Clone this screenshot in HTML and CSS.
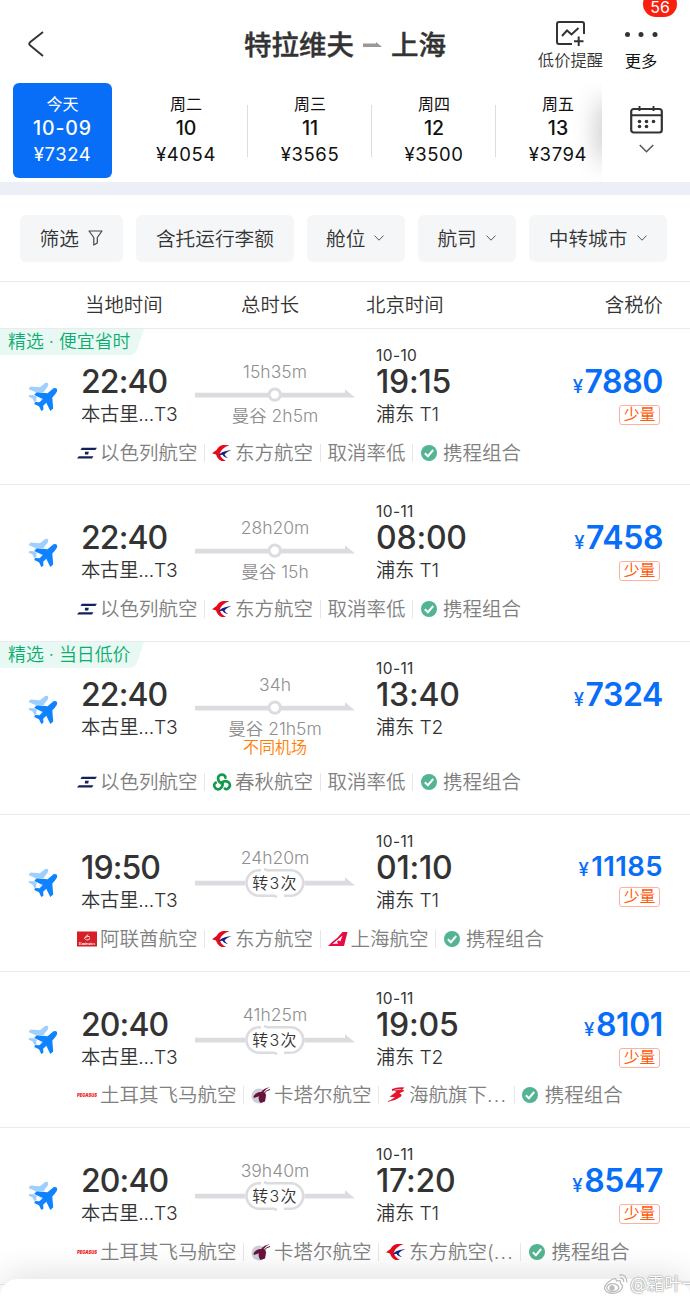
FILE: index.html
```html
<!DOCTYPE html>
<html lang="zh-CN">
<head>
  <meta charset="UTF-8">
  <meta name="viewport" content="width=device-width, initial-scale=1.0">
  <title>特拉维夫 - 上海</title>
  <link rel="stylesheet" href="styles.css">
</head>
<body>
  <!-- shared icons -->
  <svg class="sprite" width="0" height="0">
    <symbol id="chevron" viewBox="0 0 10 6">
      <path d="M.5 .6L5 5.2L9.500 .6" fill="none" stroke="#555" stroke-width="1"/>
    </symbol>
    <symbol id="planes" viewBox="0 0 30 30">
      <path transform="translate(-4.800 -4.300) scale(.86)" fill="#9dcfff" d="M25.500 6.300Q29.500 5 29.200 8.500Q29 10.500 24.300 15.500L25.200 26.500L22.300 29L18.300 20.800L15.200 23.700L15.400 27.800L13.300 29L11 24.200L6.200 22L7.300 20L11.500 20.300L14.800 17L6.200 13L8.600 10.300L19.500 11.200Z"/>
      <path fill="#0f83ff" stroke="#fff" stroke-width="1.200" paint-order="stroke" stroke-linejoin="round" d="M25.500 6.300Q29.500 5 29.200 8.500Q29 10.500 24.300 15.500L25.200 26.500L22.300 29L18.300 20.800L15.200 23.700L15.400 27.800L13.300 29L11 24.200L6.200 22L7.300 20L11.500 20.300L14.800 17L6.200 13L8.600 10.300L19.500 11.200Z"/>
    </symbol>
    <symbol id="route-one" viewBox="0 0 160 30">
      <path d="M0 12.800H150V9.200L160 17.400H0Z" fill="#dcdce0"/>
      <circle cx="79.800" cy="14.600" r="5.700" fill="#fff" stroke="#dcdce0" stroke-width="3"/>
    </symbol>
    <symbol id="route-many" viewBox="0 0 160 30">
      <path d="M0 12.800H150V9.200L160 17.400H0Z" fill="#dcdce0"/>
      <rect x="50" y="1" width="59.500" height="28" rx="14" fill="#fff"/>
      <path d="M66 2.200H64.300A12.800 12.800 0 0 0 64.300 27.800H79L82 29M69 1L72 2.200H95.400A12.800 12.800 0 0 1 95.400 27.800H89" fill="none" stroke="#dcdce0" stroke-width="2.600"/>
    </symbol>
    <symbol id="check" viewBox="0 0 16 16">
      <circle cx="8" cy="8" r="8" fill="#52b491"/>
      <path d="M3.800 8.200L6.900 11.200L12.200 5" fill="none" stroke="#fff" stroke-width="2"/>
    </symbol>
    <symbol id="elal" viewBox="0 0 20 18">
      <path d="M4.800 3.800H20L18.300 5.900H3.500ZM1.800 12.300H16.500L15 14.400H0Z" fill="#12215a"/>
      <path d="M8 7.800H11.800L11.200 10.400H7.800Z" fill="#12215a"/>
    </symbol>
    <symbol id="eastern" viewBox="0 0 20 18">
      <path d="M17.500 1H11Q7 1.300 4.500 6L0 9.200L4 10.600Q5.500 15.500 9.500 17H14Q8.500 14 7.700 9.700Q9 4.500 17.500 1Z" fill="#e60b1b"/>
      <path d="M19.500 6.300Q12.500 6.300 7.700 10L7 12Q9.500 10.500 10.800 10.900Q11.500 12.900 16 14Q13 12.200 12.600 10.300Q15 7.500 19.500 6.300Z" fill="#16207d"/>
    </symbol>
    <symbol id="spring" viewBox="0 0 20 18">
      <g fill="none" stroke="#15994a" stroke-width="2.700" stroke-linecap="round">
        <path id="curl" d="M10.500 10.500C5 9.500 4.500 1.700 9.800 1.600C12 1.600 13.600 2.900 13.400 4.700"/>
        <use href="#curl" transform="rotate(120 10 10)"/>
        <use href="#curl" transform="rotate(240 10 10)"/>
      </g>
    </symbol>
    <symbol id="emirates" viewBox="0 0 20 18">
      <rect width="20" height="15" y="1.500" fill="#d71f28"/>
      <path d="M9 9.800Q6.500 8.500 8.600 6.700L11.300 4.500M8.500 7.500Q11 5.500 13 7M9.500 10Q14 9.500 12 8" fill="none" stroke="#fff" stroke-width=".9"/>
      <text x="10" y="15.300" text-anchor="middle" textLength="16" lengthAdjust="spacingAndGlyphs" font-family="Liberation Serif, serif" font-weight="bold" font-size="5" fill="#fff">Emirates</text>
    </symbol>
    <symbol id="shanghai" viewBox="0 0 20 18">
      <path d="M14.500 2H19.500L16 16H0L3.500 12.500Q9 9 14.500 2Z" fill="#e50b42"/>
      <path d="M4.500 14L14.500 5.500L12.300 11.500Q10.500 9.800 9.500 11Q8.500 12.500 10.500 13.500Z" fill="#fff"/>
    </symbol>
    <symbol id="pegasus" viewBox="0 0 20 18">
      <text x="10" y="11" text-anchor="middle" textLength="20" lengthAdjust="spacingAndGlyphs" font-family="Inter, sans-serif" font-weight="900" font-style="italic" font-size="5" fill="#ed1c24">PEGASUS</text>
    </symbol>
    <symbol id="qatar" viewBox="0 0 20 18">
      <circle cx="8" cy="10" r="7.500" fill="#cbd0d8"/>
      <path d="M19 1Q12 2.700 10.200 6Q5.500 5.500 2.500 10.300L2.800 12L8 10.200Q6.700 13.500 9.500 17L14 15.500L15 9Q14.200 6.500 12.500 6Q14.500 3 19 1Z" fill="#6b123c"/>
      <path d="M19 3.500Q14.500 4.500 13.500 7" fill="none" stroke="#6b123c"/>
    </symbol>
    <symbol id="hainan" viewBox="0 0 20 18">
      <path d="M6 3Q11 .8 18.500 1.500L16 4Q19 4 18 5.300Q14 6.500 13.500 7.500Q16.500 8 15 10.500Q10 14.500 0 16Q6 13.500 9 11.200L3.500 10.800L10 6Q9 3.800 6 5Z" fill="#e5162b"/>
      <path d="M9 4Q12 3.300 15 3.500" fill="none" stroke="#fff" stroke-width=".6"/>
    </symbol>
  </svg>

  <div class="page">
    <header class="top-bar">
      <svg class="back" width="16" height="26" viewBox="0 0 16 26"><path d="M15 1L2 11.300Q.5 12.800 2 14.300L15 25" fill="none" stroke="#333" stroke-width="1.900"/></svg>
      <h1 class="title">
        <span>特拉维夫</span>
        <svg width="19" height="6" viewBox="0 0 19 6"><path d="M0 1.500H13V0L19 5H0Z" fill="#999"/></svg>
        <span>上海</span>
      </h1>
      <div class="tools">
        <div class="tool alert">
          <svg width="29" height="26" viewBox="0 0 29 26" fill="none" stroke="#333" stroke-width="2">
            <path d="M28 13V3Q28 1 26 1H3Q1 1 1 3V21Q1 23 3 23H16"/>
            <path d="M6 15L11 9.500L15.500 13.500L22.500 7M22.700 15.500V25M18 20.200H27.500"/>
          </svg>
          <span>低价提醒</span>
        </div>
        <div class="tool more">
          <span class="badge">56</span>
          <svg width="34" height="26" viewBox="0 0 34 26" fill="#333"><circle cx="3.500" cy="13.500" r="2.500"/><circle cx="17" cy="13.500" r="2.500"/><circle cx="31" cy="13.500" r="2.500"/></svg>
          <span>更多</span>
        </div>
      </div>
    </header>

    <div class="date-bar">
      <div class="dates">
        <div class="date active"><span>今天</span><b>10-09</b><em>¥7324</em></div>
        <div class="date"><span>周二</span><b>10</b><em>¥4054</em></div>
        <div class="date line"><span>周三</span><b>11</b><em>¥3565</em></div>
        <div class="date line"><span>周四</span><b>12</b><em>¥3500</em></div>
        <div class="date line"><span>周五</span><b>13</b><em>¥3794</em></div>
      </div>
      <div class="calendar">
        <svg width="33" height="28" viewBox="0 0 33 28">
          <rect x="1.200" y="3" width="30.600" height="23.500" rx="2.500" fill="none" stroke="#333" stroke-width="2.200"/>
          <path d="M1 9.200H32M9.500 0V5M23.500 0V5" stroke="#333" stroke-width="1.900"/>
          <g fill="#333"><circle cx="9.500" cy="15.500" r="1.800"/><circle cx="16.500" cy="15.500" r="1.800"/><circle cx="23.500" cy="15.500" r="1.800"/><circle cx="9.500" cy="20.500" r="1.800"/><circle cx="16.500" cy="20.500" r="1.800"/></g>
        </svg>
        <svg width="15" height="9"><use href="#chevron"/></svg>
      </div>
    </div>

    <div class="filters">
      <div class="chip">筛选 <svg width="15" height="16" viewBox="0 0 15 16"><path d="M1 1H14L9.300 7.500V13L5.800 15V7.500Z" fill="none" stroke="#444" stroke-width="1.200" stroke-linejoin="round"/></svg></div>
      <div class="chip">含托运行李额</div>
      <div class="chip">舱位 <svg width="10" height="6"><use href="#chevron"/></svg></div>
      <div class="chip">航司 <svg width="10" height="6"><use href="#chevron"/></svg></div>
      <div class="chip">中转城市 <svg width="10" height="6"><use href="#chevron"/></svg></div>
    </div>

    <div class="columns">
      <span>当地时间</span><span>总时长</span><span>北京时间</span><span>含税价</span>
    </div>

    <div class="list">
      <div class="card">
        <div class="ribbon">精选 · 便宜省时</div>
        <div class="flight">
          <svg class="planes"><use href="#planes"/></svg>
          <div class="stop"><strong>22:40</strong><span>本古里...T3</span></div>
          <div class="route"><span>15h35m</span><svg><use href="#route-one"/></svg><span>曼谷 2h5m</span></div>
          <div class="stop arrive"><small>10-10</small><strong>19:15</strong><span>浦东 T1</span></div>
          <div class="price"><p><i>¥</i>7880</p><span class="few">少量</span></div>
        </div>
        <div class="airlines">
          <span><svg><use href="#elal"/></svg>以色列航空</span><span><svg><use href="#eastern"/></svg>东方航空</span><span>取消率低</span><span class="combo"><svg><use href="#check"/></svg>携程组合</span>
        </div>
      </div>

      <div class="card">
        <div class="flight">
          <svg class="planes"><use href="#planes"/></svg>
          <div class="stop"><strong>22:40</strong><span>本古里...T3</span></div>
          <div class="route"><span>28h20m</span><svg><use href="#route-one"/></svg><span>曼谷 15h</span></div>
          <div class="stop arrive"><small>10-11</small><strong>08:00</strong><span>浦东 T1</span></div>
          <div class="price"><p><i>¥</i>7458</p><span class="few">少量</span></div>
        </div>
        <div class="airlines">
          <span><svg><use href="#elal"/></svg>以色列航空</span><span><svg><use href="#eastern"/></svg>东方航空</span><span>取消率低</span><span class="combo"><svg><use href="#check"/></svg>携程组合</span>
        </div>
      </div>

      <div class="card tall">
        <div class="ribbon">精选 · 当日低价</div>
        <div class="flight">
          <svg class="planes"><use href="#planes"/></svg>
          <div class="stop"><strong>22:40</strong><span>本古里...T3</span></div>
          <div class="route"><span>34h</span><svg><use href="#route-one"/></svg><span>曼谷 21h5m</span><span class="warn">不同机场</span></div>
          <div class="stop arrive"><small>10-11</small><strong>13:40</strong><span>浦东 T2</span></div>
          <div class="price"><p><i>¥</i>7324</p></div>
        </div>
        <div class="airlines">
          <span><svg><use href="#elal"/></svg>以色列航空</span><span><svg><use href="#spring"/></svg>春秋航空</span><span>取消率低</span><span class="combo"><svg><use href="#check"/></svg>携程组合</span>
        </div>
      </div>

      <div class="card">
        <div class="flight">
          <svg class="planes"><use href="#planes"/></svg>
          <div class="stop"><strong>19:50</strong><span>本古里...T3</span></div>
          <div class="route many"><span>24h20m</span><svg><use href="#route-many"/></svg><span class="times">转3次</span></div>
          <div class="stop arrive"><small>10-11</small><strong>01:10</strong><span>浦东 T1</span></div>
          <div class="price long"><p><i>¥</i>11185</p><span class="few">少量</span></div>
        </div>
        <div class="airlines">
          <span><svg><use href="#emirates"/></svg>阿联酋航空</span><span><svg><use href="#eastern"/></svg>东方航空</span><span><svg><use href="#shanghai"/></svg>上海航空</span><span class="combo"><svg><use href="#check"/></svg>携程组合</span>
        </div>
      </div>

      <div class="card">
        <div class="flight">
          <svg class="planes"><use href="#planes"/></svg>
          <div class="stop"><strong>20:40</strong><span>本古里...T3</span></div>
          <div class="route many"><span>41h25m</span><svg><use href="#route-many"/></svg><span class="times">转3次</span></div>
          <div class="stop arrive"><small>10-11</small><strong>19:05</strong><span>浦东 T2</span></div>
          <div class="price"><p><i>¥</i>8101</p><span class="few">少量</span></div>
        </div>
        <div class="airlines">
          <span><svg><use href="#pegasus"/></svg>土耳其飞马航空</span><span><svg><use href="#qatar"/></svg>卡塔尔航空</span><span><svg><use href="#hainan"/></svg>海航旗下<u>...</u></span><span class="combo"><svg><use href="#check"/></svg>携程组合</span>
        </div>
      </div>

      <div class="card">
        <div class="flight">
          <svg class="planes"><use href="#planes"/></svg>
          <div class="stop"><strong>20:40</strong><span>本古里...T3</span></div>
          <div class="route many"><span>39h40m</span><svg><use href="#route-many"/></svg><span class="times">转3次</span></div>
          <div class="stop arrive"><small>10-11</small><strong>17:20</strong><span>浦东 T1</span></div>
          <div class="price"><p><i>¥</i>8547</p><span class="few">少量</span></div>
        </div>
        <div class="airlines">
          <span><svg><use href="#pegasus"/></svg>土耳其飞马航空</span><span><svg><use href="#qatar"/></svg>卡塔尔航空</span><span><svg><use href="#eastern"/></svg>东方航空(<u>...</u></span><span class="combo"><svg><use href="#check"/></svg>携程组合</span>
        </div>
      </div>
    </div>

    <div class="sheet"></div>
    <div class="watermark">
      <svg width="25" height="22" viewBox="0 0 25 22" fill="none" stroke="#bbb" stroke-width="1.300">
        <path d="M9 6.500Q13 4 13.500 8Q18.500 6.500 17.500 10.500Q20.500 12 19 15.500Q16 20.500 9.500 20.300Q2 20 1.500 15Q2 10.500 9 6.500Z" fill="#fff"/>
        <ellipse cx="9.800" cy="14.700" rx="6" ry="4"/><circle cx="9" cy="15" r="2" fill="#bbb"/>
        <path d="M16.500 2Q23.500 .5 24 9.500M17 5.200Q20.500 4.500 20.800 9"/>
      </svg>
      <span>@霜叶一</span>
    </div>
  </div>
</body>
</html>
```
FILE: styles.css
```css
* {
  box-sizing: border-box;
}

body {
  margin: 0;
  background: #fff;
  color: #333;
  font-family: Inter, "Noto Sans CJK SC", sans-serif;
}

svg {
  display: block;
  flex: none;
}

.sprite {
  display: none;
}

.page {
  position: relative;
  width: 690px;
  height: 1300px;
  overflow: hidden;
}

/* header */
.top-bar {
  display: grid;
  grid-template-columns: 1fr auto 1fr;
  height: 83px;
  padding: 0 32px 0 28px;
}

.back {
  margin-top: 31px;
}

.title {
  display: flex;
  align-items: center;
  gap: 9px;
  height: 40px;
  margin: 25px 0 0 4px;
  font-size: 27.5px;
  font-weight: 500;
  line-height: 40px;
}

.title span {
  -webkit-text-stroke: 0.4px #333;
}

.tools {
  display: flex;
  justify-content: flex-end;
  gap: 21px;
}

.tool {
  position: relative;
  display: flex;
  flex-direction: column;
  align-items: center;
  padding-top: 21px;
  font-size: 16.3px;
  line-height: 24px;
  white-space: nowrap;
}

.tool svg {
  margin-bottom: 1px;
}

.alert {
  font-weight: 350;
}

.more {
  color: #111;
}

.more svg {
  margin-bottom: 2px;
}

.badge {
  position: absolute;
  top: -9px;
  left: 19px;
  width: 34px;
  height: 26px;
  border-radius: 13px;
  background: #f8200f;
  color: #fff;
  font-size: 16px;
  line-height: 33px;
  text-align: center;
}

/* date picker */
.date-bar {
  display: flex;
  height: 112px;
  border-bottom: 13px solid #eceff6;
}

.dates {
  position: relative;
  display: flex;
  width: 602px;
  overflow: hidden;
}

.dates::after {
  content: "";
  position: absolute;
  top: 22px;
  right: -14px;
  width: 14px;
  height: 52px;
  box-shadow: 0 0 26px 3px rgba(0, 0, 0, 0.25);
}

.date {
  position: relative;
  flex: none;
  display: flex;
  flex-direction: column;
  align-items: center;
  width: 124px;
  height: 95px;
  padding-top: 9px;
  color: #111;
}

.date.line::before {
  content: "";
  position: absolute;
  left: -1px;
  top: 22px;
  width: 1px;
  height: 52px;
  background: #ddd;
}

.date.active {
  width: 99px;
  margin: 0 12px 0 13px;
  border-radius: 6px;
  background: #086ef8;
  color: #fff;
}

.date span {
  font-size: 16px;
  line-height: 24px;
}

.date b {
  font-size: 19.5px;
  font-weight: 500;
  line-height: 25px;
}

.date.active b {
  letter-spacing: 0.9px;
}

.date em {
  font-size: 18.5px;
  font-style: normal;
  line-height: 27px;
  letter-spacing: 0.6px;
}

.calendar {
  display: flex;
  flex-direction: column;
  align-items: center;
  width: 88px;
  padding-top: 23px;
  gap: 10px;
}

/* filters */
.filters {
  display: flex;
  gap: 13px;
  height: 87px;
  padding: 20px 20px 0;
  border-bottom: 1px solid #e9ebf1;
}

.chip {
  display: flex;
  align-items: center;
  gap: 9px;
  height: 47px;
  padding: 0 19.5px 2px;
  border-radius: 6px;
  background: #f5f6f8;
  font-size: 19.7px;
  font-weight: 350;
  white-space: nowrap;
}

.chip svg {
  margin-right: 1px;
}

.columns {
  display: grid;
  grid-template-columns: 156px 125px 1fr auto;
  height: 47px;
  padding: 0 27px 0 85px;
  border-bottom: 1px solid #e9ebf1;
  font-size: 19.4px;
  font-weight: 350;
  line-height: 46px;
}

/* flights */
.card {
  position: relative;
  height: 156.4px;
  border-bottom: 1px solid #e9ebf1;
}

.card.tall {
  height: 173.6px;
}

.ribbon {
  position: absolute;
  top: 0;
  left: 0;
  width: 144px;
  height: 26px;
  padding-left: 8px;
  background: #e8f8f3;
  clip-path: path("M0 0H144L137 21Q135 26 130 26H0Z");
  color: #0aad6f;
  font-size: 17.9px;
  font-weight: 350;
  line-height: 25px;
  white-space: nowrap;
}

.flight {
  display: grid;
  grid-template-columns: 54px 113px 160px 1fr auto;
  height: 112.5px;
  padding: 0 27px 0 28px;
}

.tall .flight {
  height: 129px;
}

.planes {
  width: 30px;
  height: 30px;
  margin-top: 53px;
}

.stop {
  display: flex;
  flex-direction: column;
  padding-top: 35px;
}

.arrive {
  padding: 18px 0 0 21px;
}

.stop small {
  font-size: 15.5px;
  line-height: 17px;
  letter-spacing: 0.4px;
}

.stop strong {
  margin-left: -1px;
  font-size: 32px;
  font-weight: 500;
  line-height: 36px;
  letter-spacing: -0.9px;
}

.arrive strong {
  margin-left: 0;
  letter-spacing: -0.2px;
}

.stop span {
  padding-top: 1px;
  font-size: 19.3px;
  font-weight: 350;
  line-height: 27px;
  letter-spacing: -0.2px;
}

.stop:not(.arrive) span {
  margin-left: -1px;
}

.route {
  display: flex;
  flex-direction: column;
  align-items: center;
  padding-top: 31px;
  color: #8f8f8f;
  font-size: 17.5px;
  font-weight: 350;
  line-height: 23px;
}

.route svg {
  width: 160px;
  height: 30px;
  margin: -3px 0 -6px;
}

.route.many svg {
  margin-top: -1px;
}

.route .warn {
  margin-top: -4px;
  color: #ff7d00;
  font-size: 16px;
  line-height: 22px;
}

/* label printed inside the transfer pill */
.route .times {
  position: relative;
  margin-top: -20px;
  color: #333;
  font-size: 16px;
  letter-spacing: 1.2px;
}

.price {
  display: flex;
  flex-direction: column;
  align-items: flex-end;
  padding-top: 35px;
}

.price p {
  margin: 0;
  color: #086ef8;
  font-size: 32px;
  font-weight: 600;
  line-height: 36px;
  letter-spacing: -0.4px;
}

.price i {
  margin-right: 2px;
  font-size: 18.5px;
  font-style: normal;
  font-weight: 500;
}

.price.long p {
  font-size: 27.5px;
  line-height: 33px;
  letter-spacing: 0.4px;
}

.few {
  width: 41px;
  height: 20px;
  margin: 5px 3px 0 0;
  border: 1px solid #ffb09c;
  border-radius: 3px;
  color: #ff5a0a;
  font-size: 15.8px;
  line-height: 18px;
  text-align: center;
}

.price .few {
  margin-top: 1px;
}

.airlines {
  display: flex;
  align-items: center;
  height: 22px;
  padding-left: 77px;
  color: #808080;
  font-size: 19.5px;
  font-weight: 350;
  line-height: 18px;
  white-space: nowrap;
}

.airlines span {
  display: flex;
  align-items: center;
  gap: 3px;
  height: 18px;
}

.airlines span + span {
  margin-left: 6.5px;
  padding-left: 7px;
  border-left: 1px solid #e6e6e6;
}

.airlines svg {
  width: 20px;
  height: 18px;
}

.airlines u {
  margin-left: -3px;
  text-decoration: none;
  letter-spacing: 1.2px;
}

.airlines span.combo {
  gap: 6.5px;
  padding-left: 7.5px;
}

.airlines .combo svg {
  width: 16px;
  height: 16px;
}

/* bottom sheet */
.sheet {
  position: absolute;
  left: 0;
  right: 0;
  bottom: 0;
  height: 21px;
  border-radius: 18px 18px 0 0;
  background: #fff;
  box-shadow: 0 0 34px rgba(0, 0, 0, 0.19);
}

.watermark {
  position: absolute;
  left: 603px;
  top: 1272px;
  display: flex;
  align-items: center;
  gap: 2px;
  color: #fff;
  font-size: 17.5px;
  line-height: 24px;
  white-space: nowrap;
  text-shadow: 0 0 1px #777, 0 0 2px #999;
}
```
